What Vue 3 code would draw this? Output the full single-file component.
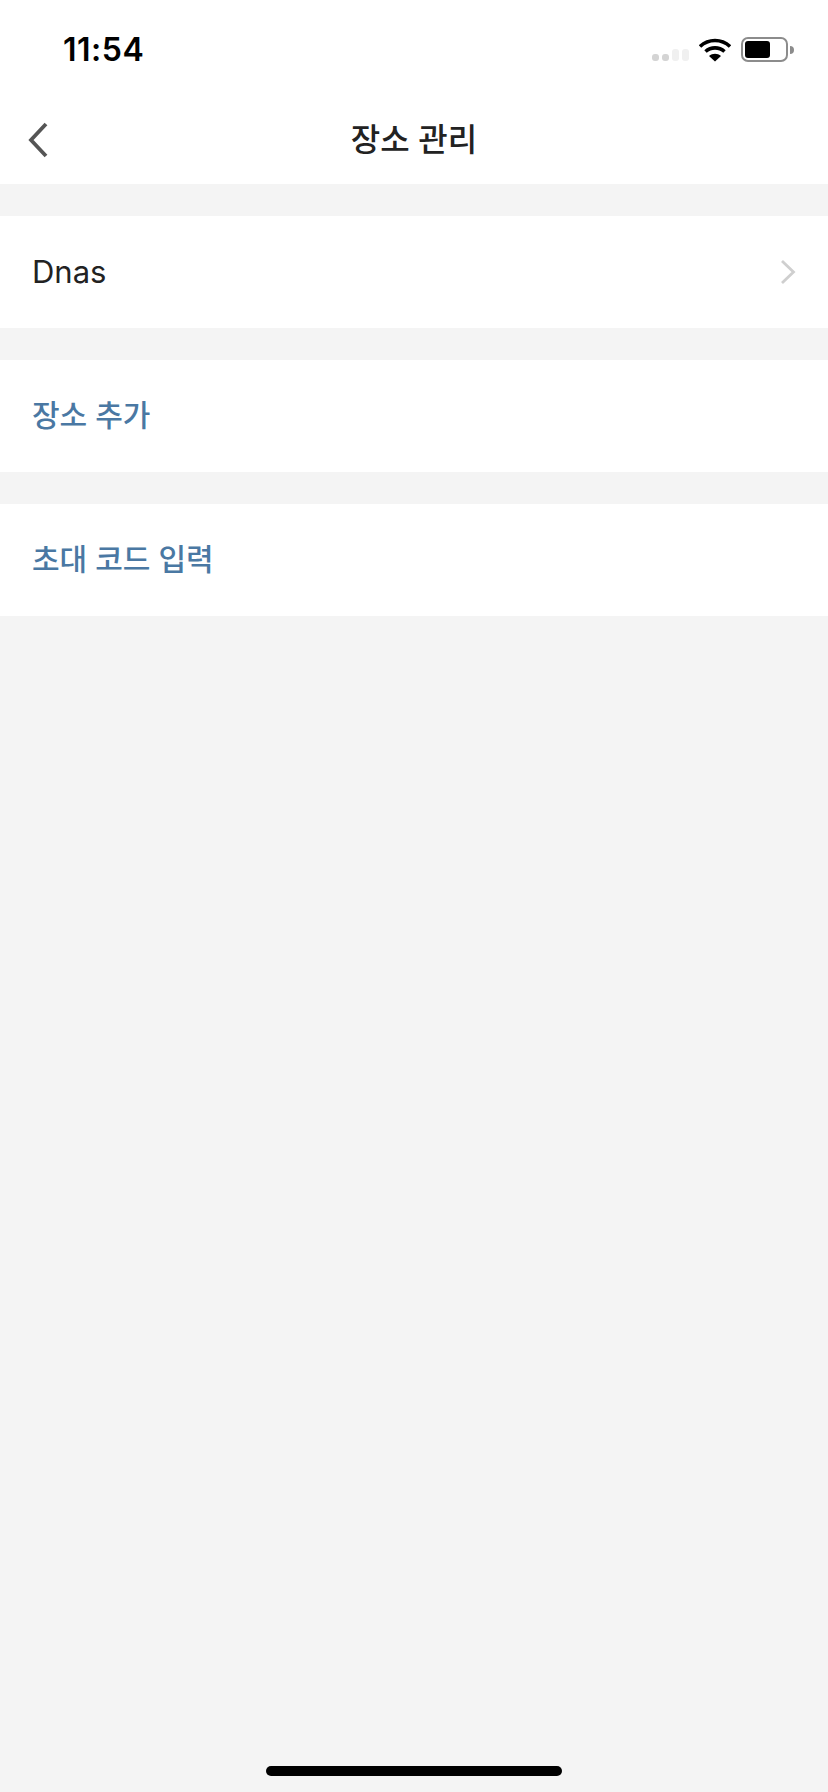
<script setup>
const rows = [
  { label: 'Dnas', arrow: true },
  { label: '장소 추가', link: true },
  { label: '초대 코드 입력', link: true },
];
</script>
<template>
  <div class="page">
    <header class="top">
      <div class="status">
        <span class="time">11:54</span>
        <div class="status-icons">
          <div class="signal">
            <i class="on" /><i class="on" /><i /><i />
          </div>
          <svg class="wifi" width="32" height="24" viewBox="0 0 32 24">
            <path d="M1 8.5C9.5 0.5 22.5 0.5 31 8.5" fill="none" stroke="#000" stroke-width="3.6" />
            <path d="M6.5 13.5C12 8.6 20 8.6 25.5 13.5" fill="none" stroke="#000" stroke-width="3.6" />
            <path d="M10 18L16 23.5L22 18C18.5 15 13.5 15 10 18Z" fill="#000" />
          </svg>
          <div class="battery">
            <div class="battery-level" />
          </div>
          <div class="battery-cap" />
        </div>
      </div>
      <nav class="nav">
        <svg class="back" width="20" height="36" viewBox="0 0 20 36">
          <path d="M18 2L3 18L18 34" fill="none" stroke="#555" stroke-width="3.8" />
        </svg>
        <h1>장소 관리</h1>
      </nav>
    </header>

    <main class="list">
      <div v-for="row in rows" :key="row.label" class="row" :class="{ link: row.link }">
        <span class="row-label">{{ row.label }}</span>
        <svg v-if="row.arrow" width="16" height="26" viewBox="0 0 16 26">
          <path d="M2 2L13.5 13L2 24" fill="none" stroke="#cfcfcf" stroke-width="2.8" />
        </svg>
      </div>
    </main>

    <div class="home-bar" />
  </div>
</template>
<style scoped>
.page {
  position: relative;
  display: flex;
  flex-direction: column;
  width: 828px;
  height: 1792px;
  overflow: hidden;
  background: #f4f4f4;
  font-family: Inter, "Noto Sans CJK KR", sans-serif;
}

.top {
  background: #fff;
}

.status {
  display: flex;
  align-items: center;
  justify-content: space-between;
  height: 88px;
  padding: 11px 34px 0 63px;
  box-sizing: border-box;
}

.time {
  font-size: 32px;
  font-weight: 600;
  letter-spacing: 0.5px;
  color: #000;
}

.status-icons {
  display: flex;
  align-items: center;
}

.signal {
  display: flex;
  align-items: flex-end;
  gap: 3px;
  height: 14px;
  margin: 9px 10px 0 0;
}

.signal i {
  width: 7px;
  height: 12px;
  border-radius: 3px;
  background: #f0f0f0;
}

.signal i.on {
  height: 7px;
  background: #d4d4d4;
}

.battery {
  width: 47px;
  height: 25px;
  padding: 2px;
  margin-left: 10px;
  box-sizing: border-box;
  border: 2px solid #8c8c8c;
  border-radius: 7px;
}

.battery-level {
  width: 25px;
  height: 100%;
  border-radius: 3px;
  background: #000;
}

.battery-cap {
  width: 4px;
  height: 8px;
  margin-left: 2px;
  border-radius: 0 4px 4px 0;
  background: #8c8c8c;
}

.nav {
  display: flex;
  align-items: center;
  justify-content: center;
  position: relative;
  height: 96px;
  padding-top: 1px;
  box-sizing: border-box;
}

.back {
  position: absolute;
  left: 28px;
  top: 34px;
}

h1 {
  margin: 0;
  font-size: 32px;
  font-weight: 500;
  color: #222;
}

.list {
  display: flex;
  flex-direction: column;
  gap: 32px;
  padding-top: 32px;
}

.row {
  display: flex;
  align-items: center;
  justify-content: space-between;
  height: 112px;
  padding: 0 32px;
  box-sizing: border-box;
  background: #fff;
  font-size: 31px;
  color: #222;
}

.row-label {
  margin-bottom: 2px;
}

.row.link {
  padding-bottom: 4px;
  font-size: 30px;
  font-weight: 500;
  color: #4a78a3;
}

.home-bar {
  position: absolute;
  left: 266px;
  bottom: 16px;
  width: 296px;
  height: 10px;
  border-radius: 5px;
  background: #000;
}
</style>
<style>
body {
  background: #f4f4f4;
}
</style>
